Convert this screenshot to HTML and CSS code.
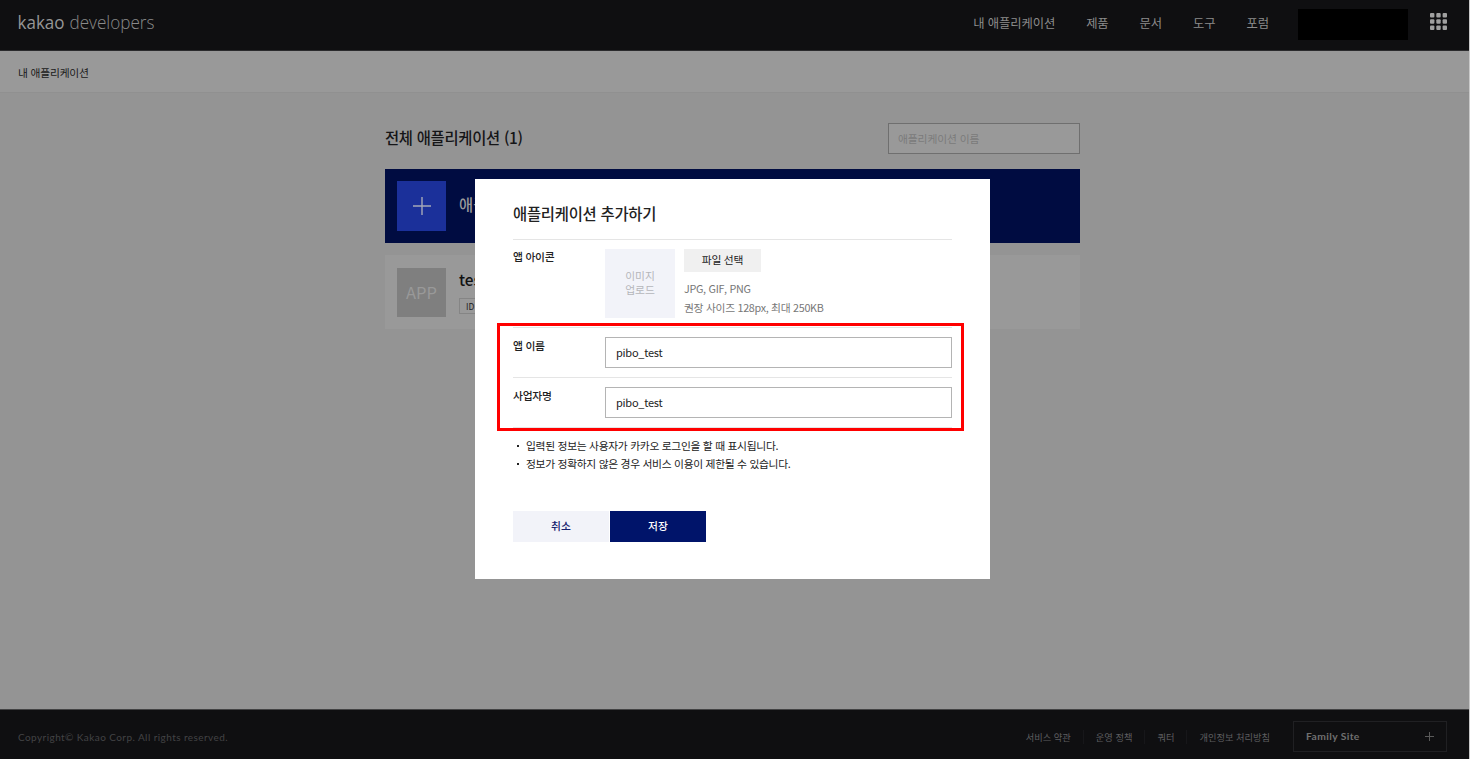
FILE: index.html
```
<!DOCTYPE html>
<html lang="ko">
<head>
<meta charset="utf-8">
<title>kakao developers</title>
<link rel="stylesheet" href="styles.css">
</head>
<body>
<div class="page">
  <header class="header">
    <svg class="logo" width="140" height="30" viewBox="0 0 140 30">
      <text class="logo-bold" x="0.5" y="19.5" textLength="47" lengthAdjust="spacingAndGlyphs">kakao</text>
      <text class="logo-light" x="52.5" y="19.5" textLength="85" lengthAdjust="spacingAndGlyphs">developers</text>
    </svg>
    <nav class="nav">
      <a>내 애플리케이션</a><a>제품</a><a>문서</a><a>도구</a><a>포럼</a>
    </nav>
    <div class="account"></div>
    <svg class="grid-icon" width="17" height="17" viewBox="0 0 17 17">
      <g fill="#a0a0a0">
        <rect x="0" y="0" width="4.4" height="4.4" rx="1"/><rect x="6.3" y="0" width="4.4" height="4.4" rx="1"/><rect x="12.6" y="0" width="4.4" height="4.4" rx="1"/>
        <rect x="0" y="6.3" width="4.4" height="4.4" rx="1"/><rect x="6.3" y="6.3" width="4.4" height="4.4" rx="1"/><rect x="12.6" y="6.3" width="4.4" height="4.4" rx="1"/>
        <rect x="0" y="12.6" width="4.4" height="4.4" rx="1"/><rect x="6.3" y="12.6" width="4.4" height="4.4" rx="1"/><rect x="12.6" y="12.6" width="4.4" height="4.4" rx="1"/>
      </g>
    </svg>
  </header>
  <div class="breadcrumb">내 애플리케이션</div>
  <main class="main">
    <div class="list-head">
      <h1 class="heading">전체 애플리케이션 (1)</h1>
      <div class="search">애플리케이션 이름</div>
    </div>
    <div class="card card-add">
      <div class="thumb thumb-add">
        <svg width="20" height="20" viewBox="0 0 20 20"><path d="M10 1v18M1 10h18" stroke="#a5a8b8" stroke-width="1.4"/></svg>
      </div>
      <div class="add-label">애플</div>
    </div>
    <div class="card card-app">
      <div class="thumb thumb-app">APP</div>
      <div class="app-info">
        <div class="app-name">tes</div>
        <div class="app-id">ID</div>
      </div>
    </div>
  </main>
  <footer class="footer">
    <div class="copyright">Copyright© Kakao Corp. All rights reserved.</div>
    <div class="links"><a>서비스 약관</a><a>운영 정책</a><a>쿼터</a><a>개인정보 처리방침</a></div>
    <div class="family"><span>Family Site</span>
      <svg width="9" height="9" viewBox="0 0 9 9"><path d="M4.5 0v9M0 4.5h9" stroke="#5a5a5a"/></svg>
    </div>
  </footer>

  <section class="modal">
    <h2 class="modal-title">애플리케이션 추가하기</h2>
    <div class="row row-icon">
      <div class="label">앱 아이콘</div>
      <div class="upload">이미지<br>업로드</div>
      <div class="file">
        <div class="file-btn">파일 선택</div>
        <div class="hint">JPG, GIF, PNG<br>권장 사이즈 128px, 최대 250KB</div>
      </div>
    </div>
    <div class="row row-field">
      <div class="label">앱 이름</div>
      <div class="field">pibo_test</div>
    </div>
    <div class="row row-field row-last">
      <div class="label">사업자명</div>
      <div class="field">pibo_test</div>
    </div>
    <ul class="notes">
      <li>입력된 정보는 사용자가 카카오 로그인을 할 때 표시됩니다.</li>
      <li>정보가 정확하지 않은 경우 서비스 이용이 제한될 수 있습니다.</li>
    </ul>
    <div class="actions">
      <div class="btn btn-cancel">취소</div>
      <div class="btn btn-save">저장</div>
    </div>
    <div class="marker"></div>
  </section>
</div>
</body>
</html>
```
FILE: styles.css
```
* { box-sizing: border-box; }
body {
  margin: 0;
  background: #c9c9c9;
  font-family: "Noto Sans CJK KR", sans-serif;
  font-size: 10.77px;
  color: #222;
}
.page {
  position: relative;
  display: flex;
  flex-direction: column;
  width: 1469px;
  height: 759px;
  overflow: hidden;
  background: #949494;
}
.header {
  display: flex;
  align-items: flex-start;
  height: 51px;
  padding: 9px 22px 0 17px;
  background: #0f0f11;
  border-bottom: 1px solid #2b2b2d;
}
.logo-bold, .logo-light {
  font-family: "Open Sans", sans-serif;
  font-size: 17.5px;
  fill: #969696;
}
.logo-bold { font-weight: 500; }
.logo-light { font-weight: 300; fill: #8a8a8a; }
.nav {
  display: flex;
  gap: 31px;
  margin-left: auto;
  font-size: 12.32px;
  line-height: 28px;
  letter-spacing: -.1px;
  color: #8c8c8c;
  white-space: nowrap;
}
.account { width: 110px; height: 31px; margin-left: 29px; background: #000; }
.grid-icon { margin: 4px 0 0 22px; }
.breadcrumb {
  height: 42px;
  padding: 1px 0 0 18px;
  line-height: 41px;
  letter-spacing: -.2px;
  background: #999;
  border-bottom: 1px solid #909090;
  color: #191919;
}
.main { flex: 1; width: 695px; margin-left: 385px; padding-top: 30px; }
.list-head { display: flex; justify-content: space-between; height: 46px; }
.heading { margin: 0; font-size: 15.4px; font-weight: 500; line-height: 28px; letter-spacing: -.3px; color: #151517; }
.search {
  width: 192px;
  height: 31px;
  padding-left: 9px;
  line-height: 29px;
  letter-spacing: -.1px;
  background: #999;
  border: 1px solid #6f6f6f;
  color: #7b7b7b;
}
.card { display: flex; height: 74px; padding: 12px; gap: 13px; }
.card-add { background: #000c41; }
.card-app { margin-top: 12px; background: #999; }
.thumb { display: flex; align-items: center; justify-content: center; width: 49px; height: 50px; flex: none; }
.thumb-add { background: #1b309a; }
.thumb-app { height: 49px; margin-top: 1px; padding-bottom: 1px; background: #7f7f7f; font-size: 16.5px; color: #999; }
.add-label { font-size: 15.4px; font-weight: 500; line-height: 47px; color: #999; }
.app-name { font-size: 15.4px; font-weight: 500; line-height: 25px; color: #111; }
.app-id {
  width: 40px;
  height: 16px;
  margin-top: 6px;
  padding-left: 6px;
  border: 1px solid #858585;
  font-size: 8.5px;
  line-height: 14px;
}
.footer {
  display: flex;
  align-items: center;
  height: 50px;
  padding: 4px 22px 0 18px;
  background: #0f0f11;
  border-top: 1px solid #434344;
}
.copyright {
  font-family: Lato, sans-serif;
  font-size: 10px;
  letter-spacing: .43px;
  color: #434345;
}
.links { display: flex; margin-left: auto; font-size: 9.24px; color: #5e5e60; }
.links a + a { margin-left: 12px; padding-left: 12px; border-left: 1px solid #17171a; }
.family {
  display: flex;
  align-items: center;
  justify-content: space-between;
  width: 154px;
  height: 31px;
  margin-left: 23px;
  padding: 0 12px 1px;
  border: 1px solid #202023;
  font-family: Lato, sans-serif;
  font-size: 10.3px;
  font-weight: 700;
  letter-spacing: .4px;
  color: #707070;
}
.modal {
  position: absolute;
  left: 475px;
  top: 179px;
  width: 515px;
  height: 400px;
  padding: 0 38px;
  background: #fff;
  letter-spacing: -.25px;
}
.modal-title {
  height: 60px;
  margin: 0;
  padding-top: 22px;
  font-size: 15.4px;
  font-weight: 500;
  line-height: 25px;
}
.row { display: flex; padding-top: 9px; border-top: 1px solid #e5e5e5; }
.row-icon { height: 88px; }
.row-field { height: 50px; }
.row-last { height: 51px; border-bottom: 1px solid #e5e5e5; }
.label { width: 92px; font-weight: 500; line-height: 16px; }
.row-field .label { line-height: 17px; }
.upload {
  width: 70px;
  height: 69px;
  padding-top: 20px;
  background: #f2f3f9;
  text-align: center;
  line-height: 14px;
  color: #b5b6bb;
  letter-spacing: 0;
}
.file { margin-left: 9px; }
.file-btn { width: 77px; height: 23px; background: #f0f0f0; text-align: center; line-height: 21px; }
.hint { margin-top: 8px; line-height: 18.5px; letter-spacing: -.3px; color: #777; white-space: nowrap; }
.field {
  width: 347px;
  height: 31px;
  padding-left: 10px;
  border: 1px solid #b4b4b4;
  font-size: 11px;
  line-height: 29px;
}
.notes { margin: 9px 0 0; padding: 0; list-style: none; line-height: 18px; letter-spacing: -.3px; }
.notes li { display: flex; align-items: center; gap: 7px; white-space: nowrap; }
.notes li::before { content: ""; width: 2px; height: 2px; margin-left: 4px; background: #222; }
.actions { display: flex; gap: 1px; margin-top: 38px; letter-spacing: 0; }
.btn { width: 96px; height: 31px; text-align: center; line-height: 29px; font-weight: 500; }
.btn-cancel { background: #f2f3f9; color: #16226e; }
.btn-save { background: #00146a; color: #fff; }
.marker {
  position: absolute;
  left: 22px;
  top: 144px;
  width: 467px;
  height: 108px;
  border: 3px solid #f00;
}
```
